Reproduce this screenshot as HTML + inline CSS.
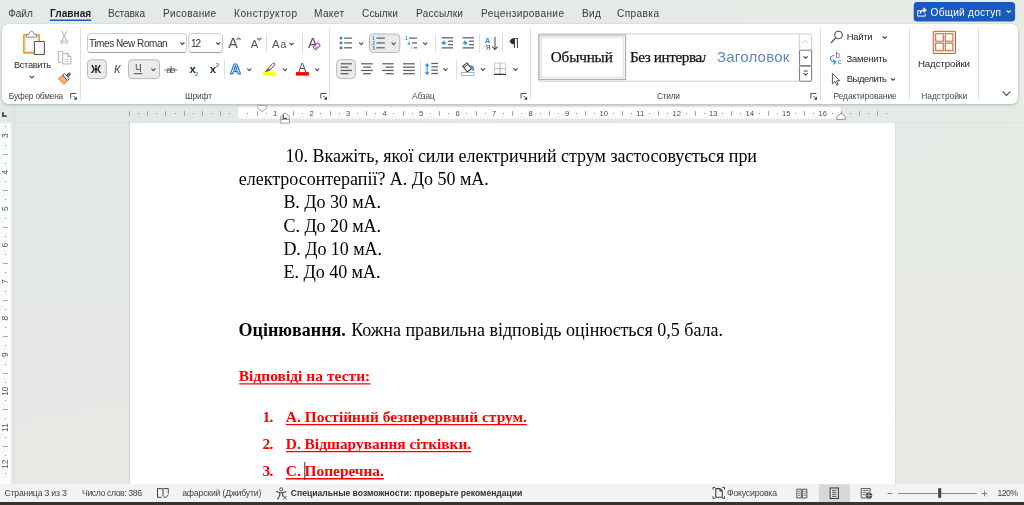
<!DOCTYPE html>
<html lang="ru"><head><meta charset="utf-8"><title>Word</title>
<style>
html,body{margin:0;padding:0;}
body{width:1024px;height:505px;overflow:hidden;position:relative;background:linear-gradient(90deg,#e4e9e9 0%,#e6ebe8 50%,#e8ece6 100%);font-family:"Liberation Sans", sans-serif;}
.abs{position:absolute;}
#ribbon{left:2px;top:24px;width:1016px;height:80px;background:#fff;border-radius:6px;box-shadow:0 1px 3px rgba(0,0,0,.22),0 0 1px rgba(0,0,0,.18);}
#docbg{left:0;top:105px;width:1024px;height:379px;background:linear-gradient(180deg,rgba(237,231,226,0) 0%,rgba(237,231,226,0) 12%,rgba(237,231,226,.62) 100%),linear-gradient(90deg,#e1e8e8 0%,#e3e9e6 60%,#e5ebe5 100%);}
#vline{left:14px;top:105px;width:1px;height:379px;background:#d9dedd;}
#hline{left:15px;top:122px;width:1009px;height:1px;background:rgba(0,0,0,.035);}
#vruler{left:0;top:123px;width:11px;height:361px;background:#fbfcfc;}
#page{left:130px;top:123px;width:765px;height:361px;background:#fff;box-shadow:-1px 0 0 rgba(0,0,0,.08),1px 0 0 rgba(0,0,0,.05);}
#status{left:0;top:484px;width:1024px;height:18px;background:#f3f3f3;}
#bottom{left:0;top:502px;width:1024px;height:3px;background:#3c322b;}
svg{position:absolute;left:0;top:0;will-change:transform;}
</style></head><body>
<div class="abs" id="docbg"></div>
<div class="abs" id="hline"></div>
<div class="abs" id="vline"></div>
<div class="abs" id="vruler"></div>
<div class="abs" id="page"></div>
<div class="abs" id="ribbon"></div>
<div class="abs" id="status"></div>
<div class="abs" id="bottom"></div>
<svg width="1024" height="505" viewBox="0 0 1024 505">
<text x="8.2" y="16.7" font-family='"Liberation Sans", sans-serif' font-size="10.1" font-weight="400" fill="#3a3a3a" textLength="24.60" lengthAdjust="spacing">Файл</text>
<text x="50" y="16.7" font-family='"Liberation Sans", sans-serif' font-size="10.1" font-weight="700" fill="#1c1c1c" textLength="41.20" lengthAdjust="spacing">Главная</text>
<text x="108" y="16.7" font-family='"Liberation Sans", sans-serif' font-size="10.1" font-weight="400" fill="#3a3a3a" textLength="37.00" lengthAdjust="spacing">Вставка</text>
<text x="163" y="16.7" font-family='"Liberation Sans", sans-serif' font-size="10.1" font-weight="400" fill="#3a3a3a" textLength="53.00" lengthAdjust="spacing">Рисование</text>
<text x="234" y="16.7" font-family='"Liberation Sans", sans-serif' font-size="10.1" font-weight="400" fill="#3a3a3a" textLength="63.00" lengthAdjust="spacing">Конструктор</text>
<text x="314" y="16.7" font-family='"Liberation Sans", sans-serif' font-size="10.1" font-weight="400" fill="#3a3a3a" textLength="30.00" lengthAdjust="spacing">Макет</text>
<text x="362" y="16.7" font-family='"Liberation Sans", sans-serif' font-size="10.1" font-weight="400" fill="#3a3a3a" textLength="36.00" lengthAdjust="spacing">Ссылки</text>
<text x="416" y="16.7" font-family='"Liberation Sans", sans-serif' font-size="10.1" font-weight="400" fill="#3a3a3a" textLength="47.00" lengthAdjust="spacing">Рассылки</text>
<text x="481" y="16.7" font-family='"Liberation Sans", sans-serif' font-size="10.1" font-weight="400" fill="#3a3a3a" textLength="83.00" lengthAdjust="spacing">Рецензирование</text>
<text x="582" y="16.7" font-family='"Liberation Sans", sans-serif' font-size="10.1" font-weight="400" fill="#3a3a3a" textLength="19.00" lengthAdjust="spacing">Вид</text>
<text x="617" y="16.7" font-family='"Liberation Sans", sans-serif' font-size="10.1" font-weight="400" fill="#3a3a3a" textLength="42.00" lengthAdjust="spacing">Справка</text>
<rect x="49.8" y="19.5" width="41.6" height="1.5" rx="0.75" fill="#185abd" stroke="none" stroke-width="1"/>
<rect x="913.7" y="2.1" width="101.4" height="19.4" rx="3.5" fill="#185abd" stroke="none" stroke-width="1"/>
<text x="930.6" y="15.9" font-family='"Liberation Sans", sans-serif' font-size="10.1" font-weight="400" fill="#ffffff" textLength="70.40" lengthAdjust="spacing">Общий доступ</text>
<path d="M1007.0,10.799999999999999 L1008.7,12.4 L1010.4000000000001,10.799999999999999" stroke="#fff" fill="none" stroke-width="1.1" stroke-linecap="round" stroke-linejoin="round"/>
<path d="M920.6,10.7 H917.7 V16.1 H925.3 V13.8" stroke="#fff" fill="none" stroke-width="1"/>
<path d="M920.2,13.6 C920.5,11.2 922.2,10.1 924.2,10.1" stroke="#fff" fill="none" stroke-width="1.3"/>
<path d="M923.7,7.5 L926.6,10.2 L923.7,12.8 Z" stroke="#fff" fill="#fff" stroke-width="0.4" stroke-linejoin="round"/>
<line x1="80.5" y1="28" x2="80.5" y2="99.5" stroke="#dedede" stroke-width="1"/>
<line x1="329.5" y1="28" x2="329.5" y2="99.5" stroke="#dedede" stroke-width="1"/>
<line x1="530.5" y1="28" x2="530.5" y2="99.5" stroke="#dedede" stroke-width="1"/>
<line x1="820.5" y1="28" x2="820.5" y2="99.5" stroke="#dedede" stroke-width="1"/>
<line x1="909.5" y1="28" x2="909.5" y2="99.5" stroke="#dedede" stroke-width="1"/>
<line x1="978.5" y1="28" x2="978.5" y2="99.5" stroke="#dedede" stroke-width="1"/>
<line x1="266.5" y1="34" x2="266.5" y2="52.6" stroke="#dedede" stroke-width="1"/>
<line x1="302.5" y1="34" x2="302.5" y2="52.6" stroke="#dedede" stroke-width="1"/>
<line x1="224.5" y1="60" x2="224.5" y2="78.5" stroke="#dedede" stroke-width="1"/>
<line x1="435.5" y1="34" x2="435.5" y2="52.6" stroke="#dedede" stroke-width="1"/>
<line x1="479.5" y1="34" x2="479.5" y2="52.6" stroke="#dedede" stroke-width="1"/>
<line x1="502.5" y1="34" x2="502.5" y2="52.6" stroke="#dedede" stroke-width="1"/>
<line x1="420.5" y1="60" x2="420.5" y2="78.5" stroke="#dedede" stroke-width="1"/>
<line x1="456.5" y1="60" x2="456.5" y2="78.5" stroke="#dedede" stroke-width="1"/>
<rect x="23.9" y="34.8" width="15.2" height="18.1" rx="0.4" fill="#f9f9f9" stroke="#ee9a38" stroke-width="1.7"/>
<rect x="25.2" y="36.1" width="12.6" height="15.5" rx="0" fill="none" stroke="#f8d3a2" stroke-width="0.9"/>
<path d="M26.6,37.1 V34.4 H28.9 C29.2,30.3 33.8,30.3 34.1,34.4 H36.4 V37.1 Z" stroke="#868686" fill="#fff" stroke-width="1" stroke-linejoin="round"/>
<rect x="34.4" y="41.5" width="10" height="13" rx="0.3" fill="#fafafa" stroke="#5a5a5a" stroke-width="1.1"/>
<text x="13.9" y="67.6" font-family='"Liberation Sans", sans-serif' font-size="9.3" font-weight="400" fill="#2e2e2e" textLength="37.10" lengthAdjust="spacing">Вставить</text>
<path d="M30.0,76.1 L31.9,77.9 L33.8,76.1" stroke="#444" fill="none" stroke-width="1.1" stroke-linecap="round" stroke-linejoin="round"/>
<path d="M61.7,31 L66.3,40.2 M66.8,31 L62.2,40.2" stroke="#a6a6a6" fill="none" stroke-width="0.9"/>
<circle cx="62" cy="41.8" r="1.4" fill="none" stroke="#a6a6a6" stroke-width="0.9"/><circle cx="66.5" cy="41.8" r="1.4" fill="none" stroke="#a6a6a6" stroke-width="0.9"/>
<path d="M61.3,62.6 H58.4 V51.6 H63.2 V52.4" stroke="#acacac" fill="none" stroke-width="0.9"/>
<path d="M62.7,53.4 H67.7 L70.9,56.6 V64 H62.7 Z M67.7,53.4 V56.6 H70.9" stroke="#a8a8a8" fill="none" stroke-width="0.9" stroke-linejoin="round"/>
<path d="M65.2,59.4 H69 M65.2,61.6 H69" stroke="#bcbcbc" fill="none" stroke-width="0.8"/>
<path d="M58.5,78.6 L62.4,75.4 L67.3,80.6 L63.7,84.3 Z" stroke="#e8701a" fill="#f7b877" stroke-width="1" stroke-linejoin="round"/>
<path d="M62.6,75 L64.5,73.5 L69.3,78.7 L67.5,80.4 Z" stroke="#333" fill="#fff" stroke-width="0.9" stroke-linejoin="round"/>
<line x1="67.2" y1="76" x2="70.1" y2="73.2" stroke="#333" stroke-width="2.6"/>
<line x1="67.6" y1="75.6" x2="69.8" y2="73.5" stroke="#fff" stroke-width="0.8"/>
<text x="8.8" y="98.9" font-family='"Liberation Sans", sans-serif' font-size="8.35" font-weight="400" fill="#484848" textLength="54.40" lengthAdjust="spacing">Буфер обмена</text>
<path d="M70.7,98.5 V93.5 H76.3" stroke="#505050" fill="none" stroke-width="1"/>
<path d="M73.3,95.9 L76.10000000000001,98.7" stroke="#404040" fill="none" stroke-width="1"/>
<path d="M76.9,96.5 V99.7 H73.7 Z" stroke="none" fill="#404040" stroke-width="1"/>
<rect x="87.5" y="33.6" width="98.9" height="19" rx="3" fill="#fff" stroke="#c6c6c6" stroke-width="1"/>
<line x1="89" y1="52.5" x2="185" y2="52.5" stroke="#a4a4a4" stroke-width="1"/>
<text x="89" y="47" font-family='"Liberation Sans", sans-serif' font-size="10" font-weight="400" fill="#333" textLength="78.60" lengthAdjust="spacing">Times New Roman</text>
<path d="M180.70000000000002,42.75 L182.4,44.45 L184.1,42.75" stroke="#444" fill="none" stroke-width="1.1" stroke-linecap="round" stroke-linejoin="round"/>
<rect x="188.8" y="33.6" width="33.7" height="19" rx="3" fill="#fff" stroke="#c6c6c6" stroke-width="1"/>
<line x1="190.5" y1="52.5" x2="221" y2="52.5" stroke="#a4a4a4" stroke-width="1"/>
<text x="191" y="47" font-family='"Liberation Sans", sans-serif' font-size="10" font-weight="400" fill="#333" textLength="10.00" lengthAdjust="spacing">12</text>
<path d="M216.5,42.75 L218.2,44.45 L219.89999999999998,42.75" stroke="#444" fill="none" stroke-width="1.1" stroke-linecap="round" stroke-linejoin="round"/>
<text x="228.2" y="47.5" font-family='"Liberation Sans", sans-serif' font-size="14.3" font-weight="400" fill="#505050" textLength="9.50" lengthAdjust="spacing">A</text>
<path d="M236.9,39.6 L238.6,37.9 L240.3,39.6" stroke="#2e8bd8" fill="none" stroke-width="1.3" stroke-linecap="round" stroke-linejoin="round"/>
<text x="250.7" y="47.5" font-family='"Liberation Sans", sans-serif' font-size="11.2" font-weight="400" fill="#505050" textLength="7.30" lengthAdjust="spacing">A</text>
<path d="M257.6,38.3 L259.3,40 L261,38.3" stroke="#2e8bd8" fill="none" stroke-width="1.3" stroke-linecap="round" stroke-linejoin="round"/>
<text x="272" y="47.5" font-family='"Liberation Sans", sans-serif' font-size="11.2" font-weight="400" fill="#505050" textLength="7.40" lengthAdjust="spacing">A</text>
<text x="280.5" y="47.5" font-family='"Liberation Sans", sans-serif' font-size="10.2" font-weight="400" fill="#505050" textLength="4.70" lengthAdjust="spacing">a</text>
<path d="M289.8,43.05 L291.5,44.75 L293.2,43.05" stroke="#444" fill="none" stroke-width="1.1" stroke-linecap="round" stroke-linejoin="round"/>
<text x="307.9" y="47.5" font-family='"Liberation Sans", sans-serif' font-size="14.3" font-weight="400" fill="#505050" textLength="7.30" lengthAdjust="spacing">A</text>
<g transform="translate(316.7,46.2) rotate(-42)"><rect x="-3.2" y="-1.9" width="6.4" height="3.8" rx="0.6" fill="#fff" stroke="#b146c2" stroke-width="1.1"/><line x1="-0.9" y1="-1.9" x2="-0.9" y2="1.9" stroke="#b146c2" stroke-width="0.9"/></g>
<rect x="87.5" y="59.8" width="18.8" height="18.8" rx="3.5" fill="#ebebeb" stroke="#b8b8b8" stroke-width="1"/>
<text x="91" y="72.9" font-family='"Liberation Sans", sans-serif' font-size="11" font-weight="700" fill="#1f1f1f" textLength="11.10" lengthAdjust="spacing">Ж</text>
<text x="113.9" y="72.9" font-family='"Liberation Sans", sans-serif' font-size="11" font-weight="400" fill="#444" textLength="6.90" lengthAdjust="spacing" font-style="italic">К</text>
<rect x="128.5" y="59.8" width="31" height="18.8" rx="3.5" fill="#ebebeb" stroke="#b8b8b8" stroke-width="1"/>
<text x="134.9" y="71.6" font-family='"Liberation Sans", sans-serif' font-size="10" font-weight="400" fill="#505050" textLength="6.80" lengthAdjust="spacing">Ч</text>
<line x1="133.9" y1="73.7" x2="142.4" y2="73.7" stroke="#505050" stroke-width="1"/>
<path d="M151.70000000000002,68.85000000000001 L153.4,70.55 L155.1,68.85000000000001" stroke="#444" fill="none" stroke-width="1.1" stroke-linecap="round" stroke-linejoin="round"/>
<text x="166.3" y="72.9" font-family='"Liberation Sans", sans-serif' font-size="9.8" font-weight="400" fill="#5a5a5a" textLength="9.10" lengthAdjust="spacing">ab</text>
<line x1="164.5" y1="70" x2="177.5" y2="70" stroke="#5a5a5a" stroke-width="0.9"/>
<text x="189.4" y="72.9" font-family='"Liberation Sans", sans-serif' font-size="11.3" font-weight="700" fill="#2a2a2a" textLength="5.80" lengthAdjust="spacing">x</text>
<text x="195.1" y="75.7" font-family='"Liberation Sans", sans-serif' font-size="5.6" font-weight="700" fill="#2e8bd8" textLength="3.20" lengthAdjust="spacing">2</text>
<text x="209.8" y="72.9" font-family='"Liberation Sans", sans-serif' font-size="11.3" font-weight="700" fill="#2a2a2a" textLength="5.80" lengthAdjust="spacing">x</text>
<text x="215.9" y="67" font-family='"Liberation Sans", sans-serif' font-size="5.6" font-weight="700" fill="#2e8bd8" textLength="3.00" lengthAdjust="spacing">2</text>
<text x="230" y="74.3" font-family='"Liberation Sans", sans-serif' font-size="15.2" font-weight="700" fill="#ffffff" textLength="11.20" lengthAdjust="spacing" stroke="#1f74c9" stroke-width="1.1" stroke-linejoin="round">A</text>
<path d="M247.60000000000002,68.85000000000001 L249.3,70.55 L251.0,68.85000000000001" stroke="#444" fill="none" stroke-width="1.1" stroke-linecap="round" stroke-linejoin="round"/>
<path d="M268.2,68.3 L272.8,63.4 C273.8,62.4 275.6,64 274.6,65.1 L270,70 Z" stroke="#4a4a4a" fill="#fff" stroke-width="1" stroke-linejoin="round"/>
<path d="M268.2,68.3 L270,70 L267.5,71.4 L265,71.6 Z" stroke="#5a5a5a" fill="#6a6a6a" stroke-width="0.6" stroke-linejoin="round"/>
<rect x="263" y="72.1" width="13" height="3.5" rx="0" fill="#ffff00" stroke="none" stroke-width="1"/>
<path d="M283.3,68.85000000000001 L285,70.55 L286.7,68.85000000000001" stroke="#444" fill="none" stroke-width="1.1" stroke-linecap="round" stroke-linejoin="round"/>
<text x="298.3" y="71.6" font-family='"Liberation Sans", sans-serif' font-size="12.2" font-weight="400" fill="#505050" textLength="8.10" lengthAdjust="spacing">A</text>
<rect x="296" y="72.1" width="12.9" height="3.5" rx="0" fill="#ff0000" stroke="none" stroke-width="1"/>
<path d="M315.5,68.85000000000001 L317.2,70.55 L318.9,68.85000000000001" stroke="#444" fill="none" stroke-width="1.1" stroke-linecap="round" stroke-linejoin="round"/>
<text x="185" y="98.9" font-family='"Liberation Sans", sans-serif' font-size="8.35" font-weight="400" fill="#484848" textLength="27.00" lengthAdjust="spacing">Шрифт</text>
<path d="M320.8,98.5 V93.5 H326.40000000000003" stroke="#505050" fill="none" stroke-width="1"/>
<path d="M323.40000000000003,95.9 L326.2,98.7" stroke="#404040" fill="none" stroke-width="1"/>
<path d="M327.0,96.5 V99.7 H323.8 Z" stroke="none" fill="#404040" stroke-width="1"/>
<rect x="339.8" y="36.85" width="2.5" height="2.5" rx="0" fill="#2b7cd3" stroke="none" stroke-width="1"/>
<line x1="344.2" y1="38.1" x2="352" y2="38.1" stroke="#5e5e5e" stroke-width="1.25"/>
<rect x="339.8" y="41.7" width="2.5" height="2.5" rx="0" fill="#2b7cd3" stroke="none" stroke-width="1"/>
<line x1="344.2" y1="42.95" x2="352" y2="42.95" stroke="#5e5e5e" stroke-width="1.25"/>
<rect x="339.8" y="46.55" width="2.5" height="2.5" rx="0" fill="#2b7cd3" stroke="none" stroke-width="1"/>
<line x1="344.2" y1="47.8" x2="352" y2="47.8" stroke="#5e5e5e" stroke-width="1.25"/>
<path d="M359.5,42.85 L361.2,44.550000000000004 L362.9,42.85" stroke="#444" fill="none" stroke-width="1.1" stroke-linecap="round" stroke-linejoin="round"/>
<rect x="369.6" y="34" width="30.2" height="18.5" rx="3.5" fill="#ebebeb" stroke="#b8b8b8" stroke-width="1"/>
<text x="372.3" y="39.800000000000004" font-family='"Liberation Sans", sans-serif' font-size="4.8" font-weight="700" fill="#2e8bd8">1</text>
<line x1="376.4" y1="38.1" x2="384.8" y2="38.1" stroke="#5e5e5e" stroke-width="1.25"/>
<text x="372.3" y="44.650000000000006" font-family='"Liberation Sans", sans-serif' font-size="4.8" font-weight="700" fill="#2e8bd8">2</text>
<line x1="376.4" y1="42.95" x2="384.8" y2="42.95" stroke="#5e5e5e" stroke-width="1.25"/>
<text x="372.3" y="49.5" font-family='"Liberation Sans", sans-serif' font-size="4.8" font-weight="700" fill="#2e8bd8">3</text>
<line x1="376.4" y1="47.8" x2="384.8" y2="47.8" stroke="#5e5e5e" stroke-width="1.25"/>
<path d="M391.90000000000003,42.85 L393.6,44.550000000000004 L395.3,42.85" stroke="#444" fill="none" stroke-width="1.1" stroke-linecap="round" stroke-linejoin="round"/>
<text x="405" y="39.8" font-family='"Liberation Sans", sans-serif' font-size="4.8" font-weight="700" fill="#2e8bd8">1</text>
<text x="407.4" y="44.5" font-family='"Liberation Sans", sans-serif' font-size="4.8" font-weight="700" fill="#2e8bd8">a</text>
<text x="411.3" y="49.4" font-family='"Liberation Sans", sans-serif' font-size="4.8" font-weight="700" fill="#7db7e8">i</text>
<line x1="409.1" y1="38.1" x2="417" y2="38.1" stroke="#5e5e5e" stroke-width="1.25"/>
<line x1="411.9" y1="42.95" x2="417" y2="42.95" stroke="#5e5e5e" stroke-width="1.25"/>
<line x1="414" y1="47.8" x2="417" y2="47.8" stroke="#5e5e5e" stroke-width="1.25"/>
<path d="M423.5,42.85 L425.2,44.550000000000004 L426.9,42.85" stroke="#444" fill="none" stroke-width="1.1" stroke-linecap="round" stroke-linejoin="round"/>
<line x1="441.6" y1="37.8" x2="453" y2="37.8" stroke="#5e5e5e" stroke-width="1.25"/>
<line x1="448.1" y1="41.2" x2="453" y2="41.2" stroke="#5e5e5e" stroke-width="1.25"/>
<line x1="448.1" y1="44.6" x2="453" y2="44.6" stroke="#5e5e5e" stroke-width="1.25"/>
<line x1="441.6" y1="47.9" x2="453" y2="47.9" stroke="#5e5e5e" stroke-width="1.25"/>
<path d="M446.6,42.9 H442.6" stroke="#2e8bd8" fill="none" stroke-width="1.1"/>
<path d="M444.4,40.7 L441.7,42.9 L444.4,45.1 Z" stroke="#2e8bd8" fill="#2e8bd8" stroke-width="0.5" stroke-linejoin="round"/>
<line x1="462.5" y1="37.8" x2="474" y2="37.8" stroke="#5e5e5e" stroke-width="1.25"/>
<line x1="469.1" y1="41.2" x2="474" y2="41.2" stroke="#5e5e5e" stroke-width="1.25"/>
<line x1="469.1" y1="44.6" x2="474" y2="44.6" stroke="#5e5e5e" stroke-width="1.25"/>
<line x1="462.5" y1="47.9" x2="474" y2="47.9" stroke="#5e5e5e" stroke-width="1.25"/>
<path d="M462.5,42.9 H466.4" stroke="#2e8bd8" fill="none" stroke-width="1.1"/>
<path d="M464.7,40.7 L467.4,42.9 L464.7,45.1 Z" stroke="#2e8bd8" fill="#2e8bd8" stroke-width="0.5" stroke-linejoin="round"/>
<text x="484.8" y="42.6" font-family='"Liberation Sans", sans-serif' font-size="7.6" font-weight="700" fill="#2e8bd8" textLength="5.80" lengthAdjust="spacing">А</text>
<text x="485.7" y="49.5" font-family='"Liberation Sans", sans-serif' font-size="6.6" font-weight="400" fill="#333" textLength="4.70" lengthAdjust="spacing">Я</text>
<path d="M495,37.4 V49.4 M492.5,46.9 L495,49.5 L497.5,46.9" stroke="#555" fill="none" stroke-width="1.1" stroke-linejoin="round" stroke-linecap="round"/>
<path d="M514.2,38.6 H518.2 M514.2,38.6 C508.8,38.6 508.8,44 514.2,44 Z" stroke="#2f2f2f" fill="#2f2f2f" stroke-width="0.8"/>
<path d="M514.4,38.6 V48 M517.4,38.6 V48" stroke="#2f2f2f" fill="none" stroke-width="0.95"/>
<rect x="336.6" y="59.6" width="18.8" height="19" rx="4" fill="#ebebeb" stroke="#b8b8b8" stroke-width="1"/>
<line x1="340.6" y1="63.8" x2="352" y2="63.8" stroke="#5e5e5e" stroke-width="1.25"/>
<line x1="340.6" y1="67.15" x2="348.4" y2="67.15" stroke="#5e5e5e" stroke-width="1.25"/>
<line x1="340.6" y1="70.45" x2="352" y2="70.45" stroke="#5e5e5e" stroke-width="1.25"/>
<line x1="340.6" y1="73.7" x2="348.4" y2="73.7" stroke="#5e5e5e" stroke-width="1.25"/>
<line x1="361.1" y1="63.8" x2="372.8" y2="63.8" stroke="#5e5e5e" stroke-width="1.25"/>
<line x1="363.2" y1="67.15" x2="370.9" y2="67.15" stroke="#5e5e5e" stroke-width="1.25"/>
<line x1="361.1" y1="70.45" x2="372.8" y2="70.45" stroke="#5e5e5e" stroke-width="1.25"/>
<line x1="363.2" y1="73.7" x2="370.9" y2="73.7" stroke="#5e5e5e" stroke-width="1.25"/>
<line x1="382.1" y1="63.8" x2="393.7" y2="63.8" stroke="#5e5e5e" stroke-width="1.25"/>
<line x1="385.5" y1="67.15" x2="393.7" y2="67.15" stroke="#5e5e5e" stroke-width="1.25"/>
<line x1="382.1" y1="70.45" x2="393.7" y2="70.45" stroke="#5e5e5e" stroke-width="1.25"/>
<line x1="385.5" y1="73.7" x2="393.7" y2="73.7" stroke="#5e5e5e" stroke-width="1.25"/>
<line x1="403.1" y1="63.8" x2="414.8" y2="63.8" stroke="#5e5e5e" stroke-width="1.25"/>
<line x1="403.1" y1="67.15" x2="414.8" y2="67.15" stroke="#5e5e5e" stroke-width="1.25"/>
<line x1="403.1" y1="70.45" x2="414.8" y2="70.45" stroke="#5e5e5e" stroke-width="1.25"/>
<line x1="403.1" y1="73.7" x2="414.8" y2="73.7" stroke="#5e5e5e" stroke-width="1.25"/>
<path d="M427.1,64.4 V73.8" stroke="#2e8bd8" fill="none" stroke-width="1.1"/>
<path d="M425.2,65.8 L427.1,63.4 L429,65.8 Z M425.2,72.4 L427.1,74.8 L429,72.4 Z" stroke="#2e8bd8" fill="#2e8bd8" stroke-width="0.6" stroke-linejoin="round"/>
<line x1="431.3" y1="63.5" x2="438" y2="63.5" stroke="#5e5e5e" stroke-width="1.25"/>
<line x1="431.3" y1="66.8" x2="438" y2="66.8" stroke="#5e5e5e" stroke-width="1.25"/>
<line x1="431.3" y1="70.1" x2="438" y2="70.1" stroke="#5e5e5e" stroke-width="1.25"/>
<line x1="431.3" y1="73.5" x2="438" y2="73.5" stroke="#5e5e5e" stroke-width="1.25"/>
<path d="M443.7,68.65 L445.4,70.35 L447.09999999999997,68.65" stroke="#444" fill="none" stroke-width="1.1" stroke-linecap="round" stroke-linejoin="round"/>
<g transform="translate(467.3,67.6) rotate(-38)"><rect x="-2.7" y="-3.9" width="5.4" height="7.4" fill="#fff" stroke="#3b3b3b" stroke-width="1.05"/><path d="M-2.7,-2.2 H2.7" stroke="#3b3b3b" stroke-width="0.8"/></g>
<path d="M470.6,65.9 C473.2,66.2 473.6,68.6 473,70.3" stroke="#2b7cd3" fill="none" stroke-width="1.5" stroke-linecap="round"/>
<rect x="461.6" y="72.6" width="12.4" height="2.8" rx="0" fill="#fff" stroke="#9a9a9a" stroke-width="0.8"/>
<path d="M481.2,68.65 L482.9,70.35 L484.59999999999997,68.65" stroke="#444" fill="none" stroke-width="1.1" stroke-linecap="round" stroke-linejoin="round"/>
<rect x="494.5" y="63.1" width="11.2" height="11" rx="0" fill="none" stroke="#8a8a8a" stroke-width="0.8" stroke-dasharray="1,1"/>
<line x1="500.1" y1="63" x2="500.1" y2="74.2" stroke="#a0a0a0" stroke-width="0.8"/>
<line x1="494.2" y1="68.7" x2="506" y2="68.7" stroke="#a0a0a0" stroke-width="0.8"/>
<line x1="494.1" y1="74.4" x2="506" y2="74.4" stroke="#333" stroke-width="1.2"/>
<path d="M513.8,68.65 L515.5,70.35 L517.2,68.65" stroke="#444" fill="none" stroke-width="1.1" stroke-linecap="round" stroke-linejoin="round"/>
<text x="412" y="98.9" font-family='"Liberation Sans", sans-serif' font-size="8.35" font-weight="400" fill="#484848" textLength="22.70" lengthAdjust="spacing">Абзац</text>
<path d="M521,98.5 V93.5 H526.6" stroke="#505050" fill="none" stroke-width="1"/>
<path d="M523.6,95.9 L526.4,98.7" stroke="#404040" fill="none" stroke-width="1"/>
<path d="M527.2,96.5 V99.7 H524 Z" stroke="none" fill="#404040" stroke-width="1"/>
<rect x="538.3" y="33.8" width="273.4" height="47.4" rx="2" fill="#fff" stroke="#d0d0d0" stroke-width="1"/>
<rect x="539" y="35" width="86.6" height="44.6" rx="0" fill="#fff" stroke="#a6a6a6" stroke-width="1"/>
<rect x="541" y="37" width="82.6" height="40.6" rx="0" fill="none" stroke="#e3e3e3" stroke-width="1.6"/>
<text x="550.8" y="61.8" font-family='"Liberation Serif", serif' font-size="15.2" font-weight="400" fill="#111" textLength="62.00" lengthAdjust="spacing" stroke="#111" stroke-width="0.25">Обычный</text>
<clipPath id="cpst"><rect x="626" y="36" width="80" height="44"/></clipPath>
<text x="630" y="61.8" font-family='"Liberation Serif", serif' font-size="15.2" font-weight="400" fill="#111" textLength="86.00" lengthAdjust="spacing" clip-path="url(#cpst)" stroke="#111" stroke-width="0.25">Без интервала</text>
<text x="717" y="61.8" font-family='"Liberation Sans", sans-serif' font-size="15" font-weight="400" fill="#6285be" textLength="72.30" lengthAdjust="spacing">Заголовок</text>
<line x1="799.3" y1="34" x2="799.3" y2="81" stroke="#d0d0d0" stroke-width="1"/>
<path d="M803.3,42.8 L805.5,40.6 L807.7,42.8" stroke="#c0c0c0" fill="none" stroke-width="1"/>
<rect x="799.6" y="50.2" width="12" height="15.4" rx="0.6" fill="#fff" stroke="#7c7c7c" stroke-width="1"/>
<path d="M803.9,56.55 L805.6,58.25 L807.3000000000001,56.55" stroke="#444" fill="none" stroke-width="1.1" stroke-linecap="round" stroke-linejoin="round"/>
<rect x="799.6" y="66.2" width="12" height="15" rx="0.6" fill="#fff" stroke="#7c7c7c" stroke-width="1"/>
<line x1="803.5" y1="71" x2="807.8" y2="71" stroke="#444" stroke-width="1"/>
<path d="M803.9,73.35000000000001 L805.6,75.05 L807.3000000000001,73.35000000000001" stroke="#444" fill="none" stroke-width="1.1" stroke-linecap="round" stroke-linejoin="round"/>
<text x="657" y="98.9" font-family='"Liberation Sans", sans-serif' font-size="8.35" font-weight="400" fill="#484848" textLength="23.00" lengthAdjust="spacing">Стили</text>
<path d="M810.8,98.5 V93.5 H816.4" stroke="#505050" fill="none" stroke-width="1"/>
<path d="M813.4,95.9 L816.1999999999999,98.7" stroke="#404040" fill="none" stroke-width="1"/>
<path d="M817.0,96.5 V99.7 H813.8 Z" stroke="none" fill="#404040" stroke-width="1"/>
<circle cx="838.5" cy="35" r="3.9" fill="none" stroke="#444" stroke-width="1"/>
<line x1="835.6" y1="38" x2="831" y2="42.8" stroke="#444" stroke-width="1.1"/>
<text x="846.8" y="40.4" font-family='"Liberation Sans", sans-serif' font-size="9.4" font-weight="400" fill="#262626" textLength="25.70" lengthAdjust="spacing">Найти</text>
<path d="M883.0999999999999,36.75 L884.8,38.45 L886.5,36.75" stroke="#444" fill="none" stroke-width="1.1" stroke-linecap="round" stroke-linejoin="round"/>
<text x="835.4" y="58.2" font-family='"Liberation Sans", sans-serif' font-size="8.2" font-weight="400" fill="#b146c2" textLength="4.20" lengthAdjust="spacing">b</text>
<text x="837.7" y="64.2" font-family='"Liberation Sans", sans-serif' font-size="7.8" font-weight="400" fill="#2e8bd8" textLength="3.50" lengthAdjust="spacing">c</text>
<path d="M833.8,55.4 C829.2,55.8 828.8,61.6 835.6,62 M833.6,59.9 L835.9,62 L833.6,64.1" stroke="#2e8bd8" fill="none" stroke-width="1.05" stroke-linejoin="round" stroke-linecap="round"/>
<text x="846.6" y="61.6" font-family='"Liberation Sans", sans-serif' font-size="9.4" font-weight="400" fill="#262626" textLength="40.60" lengthAdjust="spacing">Заменить</text>
<path d="M832.4,73.4 V83.7 L834.9,81.4 L836.7,85.2 L838.2,84.5 L836.5,80.9 L839.9,80.7 Z" stroke="#444" fill="none" stroke-width="0.9" stroke-linejoin="round"/>
<text x="846.8" y="82.3" font-family='"Liberation Sans", sans-serif' font-size="9.4" font-weight="400" fill="#262626" textLength="40.20" lengthAdjust="spacing">Выделить</text>
<path d="M891.3,78.55000000000001 L893,80.25 L894.7,78.55000000000001" stroke="#444" fill="none" stroke-width="1.1" stroke-linecap="round" stroke-linejoin="round"/>
<text x="833.5" y="98.9" font-family='"Liberation Sans", sans-serif' font-size="8.35" font-weight="400" fill="#484848" textLength="63.20" lengthAdjust="spacing">Редактирование</text>
<rect x="933.3" y="31.3" width="22.2" height="22.2" rx="0.5" fill="#fdf1ec" stroke="#d65532" stroke-width="1"/>
<rect x="935.7" y="33.7" width="7.6" height="7.5" rx="0" fill="#fff" stroke="#d65532" stroke-width="1"/>
<rect x="945.3" y="33.7" width="7.6" height="7.5" rx="0" fill="#fff" stroke="#d65532" stroke-width="1"/>
<rect x="935.7" y="43.2" width="7.6" height="7.5" rx="0" fill="#fff" stroke="#d65532" stroke-width="1"/>
<rect x="945.3" y="43.2" width="7.6" height="7.5" rx="0" fill="#fff" stroke="#d65532" stroke-width="1"/>
<text x="918" y="67" font-family='"Liberation Sans", sans-serif' font-size="9.7" font-weight="400" fill="#262626" textLength="52.00" lengthAdjust="spacing">Надстройки</text>
<text x="921.3" y="98.9" font-family='"Liberation Sans", sans-serif' font-size="8.35" font-weight="400" fill="#484848" textLength="45.90" lengthAdjust="spacing">Надстройки</text>
<path d="M1003,91.9 L1006.5,95.3 L1010,91.9" stroke="#444" fill="none" stroke-width="1.1" stroke-linecap="round" stroke-linejoin="round"/>
<rect x="238.3" y="107.2" width="602.2" height="11.4" rx="0" fill="#ffffff" stroke="none" stroke-width="1"/>
<line x1="129.5" y1="111.2" x2="129.5" y2="115.6" stroke="#9c9c9c" stroke-width="1"/>
<rect x="138" y="113" width="1" height="1" rx="0" fill="#8a8a8a" stroke="none" stroke-width="1"/>
<line x1="147.5" y1="111.2" x2="147.5" y2="115.6" stroke="#9c9c9c" stroke-width="1"/>
<rect x="156" y="113" width="1" height="1" rx="0" fill="#8a8a8a" stroke="none" stroke-width="1"/>
<line x1="165.5" y1="111.2" x2="165.5" y2="115.6" stroke="#9c9c9c" stroke-width="1"/>
<rect x="175" y="113" width="1" height="1" rx="0" fill="#8a8a8a" stroke="none" stroke-width="1"/>
<line x1="184.5" y1="111.2" x2="184.5" y2="115.6" stroke="#9c9c9c" stroke-width="1"/>
<rect x="193" y="113" width="1" height="1" rx="0" fill="#8a8a8a" stroke="none" stroke-width="1"/>
<line x1="202.5" y1="111.2" x2="202.5" y2="115.6" stroke="#9c9c9c" stroke-width="1"/>
<rect x="211" y="113" width="1" height="1" rx="0" fill="#8a8a8a" stroke="none" stroke-width="1"/>
<line x1="220.5" y1="111.2" x2="220.5" y2="115.6" stroke="#9c9c9c" stroke-width="1"/>
<rect x="229" y="113" width="1" height="1" rx="0" fill="#8a8a8a" stroke="none" stroke-width="1"/>
<rect x="247" y="113" width="1" height="1" rx="0" fill="#8a8a8a" stroke="none" stroke-width="1"/>
<line x1="257.5" y1="111.2" x2="257.5" y2="115.6" stroke="#9c9c9c" stroke-width="1"/>
<rect x="266" y="113" width="1" height="1" rx="0" fill="#8a8a8a" stroke="none" stroke-width="1"/>
<text x="275.1" y="115.9" font-family='"Liberation Sans", sans-serif' font-size="7.6" fill="#4c4c4c" text-anchor="middle">1</text>
<rect x="284" y="113" width="1" height="1" rx="0" fill="#8a8a8a" stroke="none" stroke-width="1"/>
<line x1="293.5" y1="111.2" x2="293.5" y2="115.6" stroke="#9c9c9c" stroke-width="1"/>
<rect x="302" y="113" width="1" height="1" rx="0" fill="#8a8a8a" stroke="none" stroke-width="1"/>
<text x="311.6" y="115.9" font-family='"Liberation Sans", sans-serif' font-size="7.6" fill="#4c4c4c" text-anchor="middle">2</text>
<rect x="320" y="113" width="1" height="1" rx="0" fill="#8a8a8a" stroke="none" stroke-width="1"/>
<line x1="330.5" y1="111.2" x2="330.5" y2="115.6" stroke="#9c9c9c" stroke-width="1"/>
<rect x="339" y="113" width="1" height="1" rx="0" fill="#8a8a8a" stroke="none" stroke-width="1"/>
<text x="348.1" y="115.9" font-family='"Liberation Sans", sans-serif' font-size="7.6" fill="#4c4c4c" text-anchor="middle">3</text>
<rect x="357" y="113" width="1" height="1" rx="0" fill="#8a8a8a" stroke="none" stroke-width="1"/>
<line x1="366.5" y1="111.2" x2="366.5" y2="115.6" stroke="#9c9c9c" stroke-width="1"/>
<rect x="375" y="113" width="1" height="1" rx="0" fill="#8a8a8a" stroke="none" stroke-width="1"/>
<text x="384.6" y="115.9" font-family='"Liberation Sans", sans-serif' font-size="7.6" fill="#4c4c4c" text-anchor="middle">4</text>
<rect x="393" y="113" width="1" height="1" rx="0" fill="#8a8a8a" stroke="none" stroke-width="1"/>
<line x1="403.5" y1="111.2" x2="403.5" y2="115.6" stroke="#9c9c9c" stroke-width="1"/>
<rect x="412" y="113" width="1" height="1" rx="0" fill="#8a8a8a" stroke="none" stroke-width="1"/>
<text x="421.2" y="115.9" font-family='"Liberation Sans", sans-serif' font-size="7.6" fill="#4c4c4c" text-anchor="middle">5</text>
<rect x="430" y="113" width="1" height="1" rx="0" fill="#8a8a8a" stroke="none" stroke-width="1"/>
<line x1="439.5" y1="111.2" x2="439.5" y2="115.6" stroke="#9c9c9c" stroke-width="1"/>
<rect x="448" y="113" width="1" height="1" rx="0" fill="#8a8a8a" stroke="none" stroke-width="1"/>
<text x="457.7" y="115.9" font-family='"Liberation Sans", sans-serif' font-size="7.6" fill="#4c4c4c" text-anchor="middle">6</text>
<rect x="466" y="113" width="1" height="1" rx="0" fill="#8a8a8a" stroke="none" stroke-width="1"/>
<line x1="476.5" y1="111.2" x2="476.5" y2="115.6" stroke="#9c9c9c" stroke-width="1"/>
<rect x="485" y="113" width="1" height="1" rx="0" fill="#8a8a8a" stroke="none" stroke-width="1"/>
<text x="494.2" y="115.9" font-family='"Liberation Sans", sans-serif' font-size="7.6" fill="#4c4c4c" text-anchor="middle">7</text>
<rect x="503" y="113" width="1" height="1" rx="0" fill="#8a8a8a" stroke="none" stroke-width="1"/>
<line x1="512.5" y1="111.2" x2="512.5" y2="115.6" stroke="#9c9c9c" stroke-width="1"/>
<rect x="521" y="113" width="1" height="1" rx="0" fill="#8a8a8a" stroke="none" stroke-width="1"/>
<text x="530.7" y="115.9" font-family='"Liberation Sans", sans-serif' font-size="7.6" fill="#4c4c4c" text-anchor="middle">8</text>
<rect x="540" y="113" width="1" height="1" rx="0" fill="#8a8a8a" stroke="none" stroke-width="1"/>
<line x1="549.5" y1="111.2" x2="549.5" y2="115.6" stroke="#9c9c9c" stroke-width="1"/>
<rect x="558" y="113" width="1" height="1" rx="0" fill="#8a8a8a" stroke="none" stroke-width="1"/>
<text x="567.2" y="115.9" font-family='"Liberation Sans", sans-serif' font-size="7.6" fill="#4c4c4c" text-anchor="middle">9</text>
<rect x="576" y="113" width="1" height="1" rx="0" fill="#8a8a8a" stroke="none" stroke-width="1"/>
<line x1="585.5" y1="111.2" x2="585.5" y2="115.6" stroke="#9c9c9c" stroke-width="1"/>
<rect x="594" y="113" width="1" height="1" rx="0" fill="#8a8a8a" stroke="none" stroke-width="1"/>
<text x="603.7" y="115.9" font-family='"Liberation Sans", sans-serif' font-size="7.6" fill="#4c4c4c" text-anchor="middle">10</text>
<rect x="613" y="113" width="1" height="1" rx="0" fill="#8a8a8a" stroke="none" stroke-width="1"/>
<line x1="622.5" y1="111.2" x2="622.5" y2="115.6" stroke="#9c9c9c" stroke-width="1"/>
<rect x="631" y="113" width="1" height="1" rx="0" fill="#8a8a8a" stroke="none" stroke-width="1"/>
<text x="640.2" y="115.9" font-family='"Liberation Sans", sans-serif' font-size="7.6" fill="#4c4c4c" text-anchor="middle">11</text>
<rect x="649" y="113" width="1" height="1" rx="0" fill="#8a8a8a" stroke="none" stroke-width="1"/>
<line x1="658.5" y1="111.2" x2="658.5" y2="115.6" stroke="#9c9c9c" stroke-width="1"/>
<rect x="667" y="113" width="1" height="1" rx="0" fill="#8a8a8a" stroke="none" stroke-width="1"/>
<text x="676.7" y="115.9" font-family='"Liberation Sans", sans-serif' font-size="7.6" fill="#4c4c4c" text-anchor="middle">12</text>
<rect x="686" y="113" width="1" height="1" rx="0" fill="#8a8a8a" stroke="none" stroke-width="1"/>
<line x1="695.5" y1="111.2" x2="695.5" y2="115.6" stroke="#9c9c9c" stroke-width="1"/>
<rect x="704" y="113" width="1" height="1" rx="0" fill="#8a8a8a" stroke="none" stroke-width="1"/>
<text x="713.2" y="115.9" font-family='"Liberation Sans", sans-serif' font-size="7.6" fill="#4c4c4c" text-anchor="middle">13</text>
<rect x="722" y="113" width="1" height="1" rx="0" fill="#8a8a8a" stroke="none" stroke-width="1"/>
<line x1="731.5" y1="111.2" x2="731.5" y2="115.6" stroke="#9c9c9c" stroke-width="1"/>
<rect x="740" y="113" width="1" height="1" rx="0" fill="#8a8a8a" stroke="none" stroke-width="1"/>
<text x="749.7" y="115.9" font-family='"Liberation Sans", sans-serif' font-size="7.6" fill="#4c4c4c" text-anchor="middle">14</text>
<rect x="759" y="113" width="1" height="1" rx="0" fill="#8a8a8a" stroke="none" stroke-width="1"/>
<line x1="768.5" y1="111.2" x2="768.5" y2="115.6" stroke="#9c9c9c" stroke-width="1"/>
<rect x="777" y="113" width="1" height="1" rx="0" fill="#8a8a8a" stroke="none" stroke-width="1"/>
<text x="786.2" y="115.9" font-family='"Liberation Sans", sans-serif' font-size="7.6" fill="#4c4c4c" text-anchor="middle">15</text>
<rect x="795" y="113" width="1" height="1" rx="0" fill="#8a8a8a" stroke="none" stroke-width="1"/>
<line x1="804.5" y1="111.2" x2="804.5" y2="115.6" stroke="#9c9c9c" stroke-width="1"/>
<rect x="813" y="113" width="1" height="1" rx="0" fill="#8a8a8a" stroke="none" stroke-width="1"/>
<text x="822.8" y="115.9" font-family='"Liberation Sans", sans-serif' font-size="7.6" fill="#4c4c4c" text-anchor="middle">16</text>
<rect x="832" y="113" width="1" height="1" rx="0" fill="#8a8a8a" stroke="none" stroke-width="1"/>
<line x1="841.5" y1="111.2" x2="841.5" y2="115.6" stroke="#9c9c9c" stroke-width="1"/>
<rect x="850" y="113" width="1" height="1" rx="0" fill="#8a8a8a" stroke="none" stroke-width="1"/>
<line x1="859.5" y1="111.2" x2="859.5" y2="115.6" stroke="#9c9c9c" stroke-width="1"/>
<rect x="868" y="113" width="1" height="1" rx="0" fill="#8a8a8a" stroke="none" stroke-width="1"/>
<line x1="877.5" y1="111.2" x2="877.5" y2="115.6" stroke="#9c9c9c" stroke-width="1"/>
<rect x="886" y="113" width="1" height="1" rx="0" fill="#8a8a8a" stroke="none" stroke-width="1"/>
<path d="M2,112.2 H4 V115.2 H6.8 V117 H2 Z" stroke="none" fill="#555" stroke-width="1"/>
<path d="M257.8,105.5 H266.6 V108.4 L262.2,111.6 L257.8,108.4 Z" stroke="#9a9a9a" fill="#fff" stroke-width="0.9"/>
<path d="M285.1,113 L289.4,116.3 V119.3 H280.8 V116.3 Z" stroke="#9a9a9a" fill="#fff" stroke-width="0.9"/>
<rect x="280.8" y="119.5" width="8.6" height="3.6" rx="0" fill="#fff" stroke="#9a9a9a" stroke-width="0.9"/>
<path d="M283.2,114.6 V118.4 H287" stroke="#555" fill="none" stroke-width="1.2"/>
<path d="M841,113.2 L845.3,116.6 V119.4 H836.7 V116.6 Z" stroke="#8a8a8a" fill="#fff" stroke-width="0.9"/>
<text transform="translate(8.1,135.7) rotate(-90)" font-family='"Liberation Sans", sans-serif' font-size="8.4" fill="#555" text-anchor="middle">3</text>
<text transform="translate(8.1,172.2) rotate(-90)" font-family='"Liberation Sans", sans-serif' font-size="8.4" fill="#555" text-anchor="middle">4</text>
<text transform="translate(8.1,208.7) rotate(-90)" font-family='"Liberation Sans", sans-serif' font-size="8.4" fill="#555" text-anchor="middle">5</text>
<text transform="translate(8.1,245.2) rotate(-90)" font-family='"Liberation Sans", sans-serif' font-size="8.4" fill="#555" text-anchor="middle">6</text>
<text transform="translate(8.1,281.7) rotate(-90)" font-family='"Liberation Sans", sans-serif' font-size="8.4" fill="#555" text-anchor="middle">7</text>
<text transform="translate(8.1,318.2) rotate(-90)" font-family='"Liberation Sans", sans-serif' font-size="8.4" fill="#555" text-anchor="middle">8</text>
<text transform="translate(8.1,354.7) rotate(-90)" font-family='"Liberation Sans", sans-serif' font-size="8.4" fill="#555" text-anchor="middle">9</text>
<text transform="translate(8.1,391.2) rotate(-90)" font-family='"Liberation Sans", sans-serif' font-size="8.4" fill="#555" text-anchor="middle">10</text>
<text transform="translate(8.1,427.7) rotate(-90)" font-family='"Liberation Sans", sans-serif' font-size="8.4" fill="#555" text-anchor="middle">11</text>
<text transform="translate(8.1,464.2) rotate(-90)" font-family='"Liberation Sans", sans-serif' font-size="8.4" fill="#555" text-anchor="middle">12</text>
<rect x="5" y="126" width="1" height="1" rx="0" fill="#8c8c8c" stroke="none" stroke-width="1"/>
<rect x="5" y="145" width="1" height="1" rx="0" fill="#8c8c8c" stroke="none" stroke-width="1"/>
<line x1="3" y1="154.5" x2="7.8" y2="154.5" stroke="#a0a0a0" stroke-width="1"/>
<rect x="5" y="163" width="1" height="1" rx="0" fill="#8c8c8c" stroke="none" stroke-width="1"/>
<rect x="5" y="181" width="1" height="1" rx="0" fill="#8c8c8c" stroke="none" stroke-width="1"/>
<line x1="3" y1="190.5" x2="7.8" y2="190.5" stroke="#a0a0a0" stroke-width="1"/>
<rect x="5" y="199" width="1" height="1" rx="0" fill="#8c8c8c" stroke="none" stroke-width="1"/>
<rect x="5" y="218" width="1" height="1" rx="0" fill="#8c8c8c" stroke="none" stroke-width="1"/>
<line x1="3" y1="227.5" x2="7.8" y2="227.5" stroke="#a0a0a0" stroke-width="1"/>
<rect x="5" y="236" width="1" height="1" rx="0" fill="#8c8c8c" stroke="none" stroke-width="1"/>
<rect x="5" y="254" width="1" height="1" rx="0" fill="#8c8c8c" stroke="none" stroke-width="1"/>
<line x1="3" y1="263.5" x2="7.8" y2="263.5" stroke="#a0a0a0" stroke-width="1"/>
<rect x="5" y="272" width="1" height="1" rx="0" fill="#8c8c8c" stroke="none" stroke-width="1"/>
<rect x="5" y="291" width="1" height="1" rx="0" fill="#8c8c8c" stroke="none" stroke-width="1"/>
<line x1="3" y1="300.5" x2="7.8" y2="300.5" stroke="#a0a0a0" stroke-width="1"/>
<rect x="5" y="309" width="1" height="1" rx="0" fill="#8c8c8c" stroke="none" stroke-width="1"/>
<rect x="5" y="327" width="1" height="1" rx="0" fill="#8c8c8c" stroke="none" stroke-width="1"/>
<line x1="3" y1="336.5" x2="7.8" y2="336.5" stroke="#a0a0a0" stroke-width="1"/>
<rect x="5" y="345" width="1" height="1" rx="0" fill="#8c8c8c" stroke="none" stroke-width="1"/>
<rect x="5" y="364" width="1" height="1" rx="0" fill="#8c8c8c" stroke="none" stroke-width="1"/>
<line x1="3" y1="373.5" x2="7.8" y2="373.5" stroke="#a0a0a0" stroke-width="1"/>
<rect x="5" y="382" width="1" height="1" rx="0" fill="#8c8c8c" stroke="none" stroke-width="1"/>
<rect x="5" y="400" width="1" height="1" rx="0" fill="#8c8c8c" stroke="none" stroke-width="1"/>
<line x1="3" y1="409.5" x2="7.8" y2="409.5" stroke="#a0a0a0" stroke-width="1"/>
<rect x="5" y="418" width="1" height="1" rx="0" fill="#8c8c8c" stroke="none" stroke-width="1"/>
<rect x="5" y="437" width="1" height="1" rx="0" fill="#8c8c8c" stroke="none" stroke-width="1"/>
<line x1="3" y1="446.5" x2="7.8" y2="446.5" stroke="#a0a0a0" stroke-width="1"/>
<rect x="5" y="455" width="1" height="1" rx="0" fill="#8c8c8c" stroke="none" stroke-width="1"/>
<rect x="5" y="473" width="1" height="1" rx="0" fill="#8c8c8c" stroke="none" stroke-width="1"/>
<text x="285.6" y="161.9" font-family='"Liberation Serif", serif' font-size="18" font-weight="400" fill="#000" textLength="471.40" lengthAdjust="spacing">10. Вкажіть, якої сили електричний струм застосовується при</text>
<text x="238.8" y="184.6" font-family='"Liberation Serif", serif' font-size="18" font-weight="400" fill="#000" textLength="250.00" lengthAdjust="spacing">електросонтерапії? A. До 50 мА.</text>
<text x="283.4" y="208.4" font-family='"Liberation Serif", serif' font-size="18" font-weight="400" fill="#000" textLength="97.60" lengthAdjust="spacing">B. До 30 мА.</text>
<text x="283.6" y="231.7" font-family='"Liberation Serif", serif' font-size="18" font-weight="400" fill="#000" textLength="97.40" lengthAdjust="spacing">C. До 20 мА.</text>
<text x="283.4" y="255.1" font-family='"Liberation Serif", serif' font-size="18" font-weight="400" fill="#000" textLength="98.60" lengthAdjust="spacing">D. До 10 мА.</text>
<text x="283.4" y="278.4" font-family='"Liberation Serif", serif' font-size="18" font-weight="400" fill="#000" textLength="97.10" lengthAdjust="spacing">E. До 40 мА.</text>
<text x="238.6" y="336.1" font-family='"Liberation Serif", serif' font-size="18" font-weight="700" fill="#000" textLength="107.20" lengthAdjust="spacing">Оцінювання.</text>
<text x="351.2" y="336.1" font-family='"Liberation Serif", serif' font-size="18" font-weight="400" fill="#000" textLength="371.80" lengthAdjust="spacing">Кожна правильна відповідь оцінюється 0,5 бала.</text>
<text x="238.8" y="380.8" font-family='"Liberation Serif", serif' font-size="15.4" font-weight="700" fill="#ff0000" textLength="131.40" lengthAdjust="spacing">Відповіді на тести:</text>
<line x1="239.2" y1="383.8" x2="370.2" y2="383.8" stroke="#ff0000" stroke-width="1.35"/>
<text x="262.4" y="422" font-family='"Liberation Serif", serif' font-size="15.4" font-weight="700" fill="#ff0000" textLength="11.00" lengthAdjust="spacing">1.</text>
<text x="285.8" y="422" font-family='"Liberation Serif", serif' font-size="15.4" font-weight="700" fill="#ff0000" textLength="241.10" lengthAdjust="spacing">A. Постійний безперервний струм.</text>
<line x1="285.8" y1="424.6" x2="526.9" y2="424.6" stroke="#ff0000" stroke-width="1.35"/>
<text x="262.4" y="449" font-family='"Liberation Serif", serif' font-size="15.4" font-weight="700" fill="#ff0000" textLength="11.00" lengthAdjust="spacing">2.</text>
<text x="285.8" y="449" font-family='"Liberation Serif", serif' font-size="15.4" font-weight="700" fill="#ff0000" textLength="185.40" lengthAdjust="spacing">D. Відшарування сітківки.</text>
<line x1="285.8" y1="451.6" x2="471.2" y2="451.6" stroke="#ff0000" stroke-width="1.35"/>
<text x="262.4" y="476.1" font-family='"Liberation Serif", serif' font-size="15.4" font-weight="700" fill="#ff0000" textLength="11.00" lengthAdjust="spacing">3.</text>
<text x="285.8" y="476.1" font-family='"Liberation Serif", serif' font-size="15.4" font-weight="700" fill="#ff0000" textLength="98.10" lengthAdjust="spacing">C. Поперечна.</text>
<line x1="285.8" y1="478.70000000000005" x2="383.9" y2="478.70000000000005" stroke="#ff0000" stroke-width="1.35"/>
<line x1="304.8" y1="462" x2="304.8" y2="479.8" stroke="#333" stroke-width="1"/>
<text x="4.5" y="496.4" font-family='"Liberation Sans", sans-serif' font-size="8.7" font-weight="400" fill="#444" textLength="62.30" lengthAdjust="spacing">Страница 3 из 3</text>
<text x="82" y="496.4" font-family='"Liberation Sans", sans-serif' font-size="8.7" font-weight="400" fill="#444" textLength="60.00" lengthAdjust="spacing">Число слов: 386</text>
<path d="M157.5,488.6 H162 C162.6,488.6 163,489 163,489.6 C163,489 163.4,488.6 164,488.6 H168.3 V493.5 M157.5,488.6 V497.3 H161.5 M163,489.6 V496" stroke="#444" fill="none" stroke-width="1"/>
<path d="M163.4,496 L165.3,498 L168.6,494.6" stroke="#444" fill="none" stroke-width="1"/>
<text x="182.2" y="496.4" font-family='"Liberation Sans", sans-serif' font-size="8.7" font-weight="400" fill="#444" textLength="79.20" lengthAdjust="spacing">афарский (Джибути)</text>
<circle cx="281.2" cy="489.4" r="1.6" fill="none" stroke="#444" stroke-width="1"/>
<path d="M276.6,491.6 L279.8,492.8 V495.2 L277.8,499 M285.8,491.6 L282.6,492.8 V495.2 L283.4,496.4 M279.8,492.8 H282.6" stroke="#444" fill="none" stroke-width="1.1" stroke-linejoin="round" stroke-linecap="round"/>
<path d="M283.3,496 L286.6,499.3 M286.6,496 L283.3,499.3" stroke="#444" fill="none" stroke-width="0.9"/>
<text x="290.8" y="496.4" font-family='"Liberation Sans", sans-serif' font-size="8.6" font-weight="700" fill="#333" textLength="231.60" lengthAdjust="spacing">Специальные возможности: проверьте рекомендации</text>
<path d="M713,489.6 V487.4 H715.2 M722.3,487.4 H724.5 V489.6 M724.5,496.2 V498.4 H722.3 M715.2,498.4 H713 V496.2" stroke="#444" fill="none" stroke-width="1"/>
<path d="M715.8,488.6 H720 L722.3,490.9 V497.2 H715.8 Z M720,488.6 V490.9 H722.3" stroke="#3a3a3a" fill="none" stroke-width="1.05" stroke-linejoin="round"/>
<text x="727" y="496.4" font-family='"Liberation Sans", sans-serif' font-size="8.7" font-weight="400" fill="#444" textLength="50.00" lengthAdjust="spacing">Фокусировка</text>
<path d="M796.8,489.2 H801.3 V498 H796.8 Z M802.3,489.2 H806.8 V498 H802.3 Z" stroke="#444" fill="none" stroke-width="0.9"/>
<path d="M798,491.3 H800.2 M798,493.3 H800.2 M798,495.3 H800.2 M803.5,491.3 H805.7 M803.5,493.3 H805.7 M803.5,495.3 H805.7" stroke="#444" fill="none" stroke-width="0.7"/>
<rect x="818.8" y="484.4" width="31.2" height="17.6" rx="0" fill="#d8d8d8" stroke="none" stroke-width="1"/>
<rect x="830.2" y="488" width="8.2" height="10.4" rx="0" fill="#f4f4f4" stroke="#3a3a3a" stroke-width="1.1"/>
<path d="M832,490.3 H836.6 M832,492.3 H836.6 M832,494.3 H836.6 M832,496.3 H836.6" stroke="#3a3a3a" fill="none" stroke-width="0.9"/>
<path d="M861.2,488.6 H870.2 V492 M861.2,488.6 V498 H866" stroke="#444" fill="none" stroke-width="0.9"/>
<path d="M862.6,490.6 H868.8 M862.6,492.6 H866.5 M862.6,494.6 H865.5" stroke="#444" fill="none" stroke-width="0.7"/>
<circle cx="868.9" cy="495.6" r="2.9" fill="#555" stroke="#333" stroke-width="0.8"/>
<path d="M866,495.6 H871.8 M868.9,492.7 V498.5" stroke="#ddd" fill="none" stroke-width="0.6"/>
<line x1="887.5" y1="493.5" x2="892.5" y2="493.5" stroke="#808080" stroke-width="1"/>
<line x1="898" y1="493.5" x2="977" y2="493.5" stroke="#8a8a8a" stroke-width="1"/>
<rect x="938.2" y="488.2" width="3" height="9.6" rx="0" fill="#444" stroke="none" stroke-width="1"/>
<line x1="981.6" y1="493.5" x2="987.2" y2="493.5" stroke="#808080" stroke-width="1"/>
<line x1="984.5" y1="490.7" x2="984.5" y2="496.3" stroke="#808080" stroke-width="1"/>
<text x="997.5" y="496.4" font-family='"Liberation Sans", sans-serif' font-size="8.7" font-weight="400" fill="#444" textLength="20.50" lengthAdjust="spacing">120%</text>
</svg>
</body></html>
